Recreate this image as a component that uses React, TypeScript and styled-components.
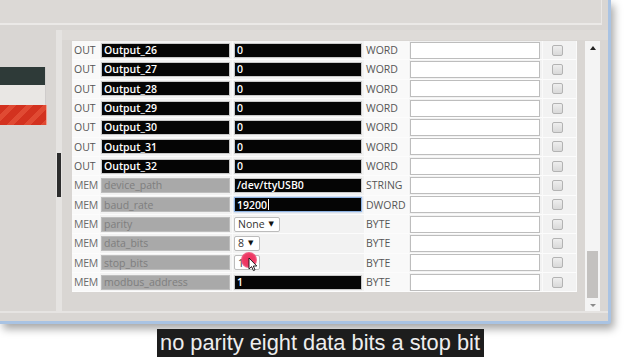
import * as React from "react"
import styled, { createGlobalStyle } from "styled-components"

const GlobalStyle = createGlobalStyle`
    html, body {
        margin: 0;
        padding: 0;
        background: #ffffff;
    }
    body {
        font-family: "Open Sans", "DejaVu Sans", sans-serif;
    }
`

type Kind = "out" | "mem"
type ValueKind = "field" | "focus" | "select"

interface IRow {
    kind: Kind
    name: string
    value: string
    valueKind: ValueKind
    type: string
    selectWidth?: number
    cursor?: boolean
}

const rows: IRow[] = [
    { kind: "out", name: "Output_26", value: "0", valueKind: "field", type: "WORD" },
    { kind: "out", name: "Output_27", value: "0", valueKind: "field", type: "WORD" },
    { kind: "out", name: "Output_28", value: "0", valueKind: "field", type: "WORD" },
    { kind: "out", name: "Output_29", value: "0", valueKind: "field", type: "WORD" },
    { kind: "out", name: "Output_30", value: "0", valueKind: "field", type: "WORD" },
    { kind: "out", name: "Output_31", value: "0", valueKind: "field", type: "WORD" },
    { kind: "out", name: "Output_32", value: "0", valueKind: "field", type: "WORD" },
    { kind: "mem", name: "device_path", value: "/dev/ttyUSB0", valueKind: "field", type: "STRING" },
    { kind: "mem", name: "baud_rate", value: "19200", valueKind: "focus", type: "DWORD" },
    { kind: "mem", name: "parity", value: "None", valueKind: "select", type: "BYTE", selectWidth: 46 },
    { kind: "mem", name: "data_bits", value: "8", valueKind: "select", type: "BYTE", selectWidth: 26 },
    { kind: "mem", name: "stop_bits", value: "1", valueKind: "select", type: "BYTE", selectWidth: 26, cursor: true },
    { kind: "mem", name: "modbus_address", value: "1", valueKind: "field", type: "BYTE" },
]

const Page = styled.div`
    width: 640px;
    height: 360px;
    overflow: hidden;
    background: #ffffff;
`

const Window = styled.div`
    width: 611px;
    height: 324px;
    display: flex;
    flex-direction: column;
    background: #d9d6d3;
    border-right: 3px solid #a9c3e3;
    border-bottom: 3px solid #a9c3e3;
    border-bottom-right-radius: 3px;
    box-shadow: 3px 5px 9px rgba(0, 0, 0, 0.35);
    padding-bottom: 8px;
    box-sizing: border-box;
`

const TopBar = styled.div`
    height: 24px;
    margin-right: 6px;
    background: #dcd9d6;
    border-bottom: 2px solid #ebe9e7;
    border-right: 1px solid #eae8e6;
`

const Main = styled.div`
    flex: 1;
    display: flex;
    margin-top: 5px;
    border-bottom: 2px solid #e6e4e2;
`

const LeftPanel = styled.div`
    width: 56px;
    padding-top: 37px;
    display: flex;
    flex-direction: column;
`

const Bar = styled.div<{ $tone: "dark" | "light" | "red" }>`
    width: ${p => (p.$tone === "red" ? 47 : 46)}px;
    height: ${p => (p.$tone === "dark" ? 18 : 20)}px;
    box-sizing: border-box;
    background: ${p =>
        p.$tone === "dark"
            ? "#2e3a38"
            : p.$tone === "light"
            ? "#e9e7e4"
            : "repeating-linear-gradient(135deg, #d3321f 0px, #d3321f 7px, #e04a33 7px, #e04a33 12px)"};
    border-right: 1px solid ${p => (p.$tone === "red" ? "#f0a090" : "#cfcccb")};
`

const Divider = styled.div`
    width: 6px;
    background: #e5e3e1;
    display: flex;
    flex-direction: column;
`

const DividerThumb = styled.div`
    margin-top: 123px;
    margin-left: 1px;
    width: 4px;
    height: 44px;
    background: #2c2c2c;
`

const Content = styled.div`
    flex: 1;
    display: flex;
    gap: 8px;
    padding: 11px 0 0 10px;
    background: linear-gradient(#dedbd8 0px, #dedbd8 10px, #d9d6d3 10px);
`

const Table = styled.div`
    width: 505px;
    display: grid;
    grid-template-columns: 28px 133px 132px 44px 134px 34px;
    grid-auto-rows: 19.33px;
    align-self: flex-start;
    background: #f3f3f3;
`

const Cell = styled.div<{ $light?: boolean }>`
    display: flex;
    align-items: center;
    box-sizing: border-box;
    padding: 0 2px 0 1px;
    background: ${p => (p.$light ? "#f9f9f9" : "#f2f2f2")};
    border-bottom: 1px solid #fcfcfc;
    border-right: 1px solid #fafafa;
    font-size: 10.5px;
    color: #565656;
    overflow: visible;
`

const KindLabel = styled.span<{ $mem: boolean }>`
    padding-left: 1px;
    color: ${p => (p.$mem ? "#6a6a6a" : "#555555")};
    letter-spacing: ${p => (p.$mem ? "-0.3px" : "0")};
`

const Field = styled.div<{ $tone: "black" | "grey"; $focus?: boolean }>`
    flex: 1;
    height: 15px;
    box-sizing: border-box;
    display: flex;
    align-items: center;
    padding-left: 2px;
    background: ${p => (p.$tone === "black" ? "#050505" : "#a9a9a9")};
    border: 1px solid ${p => (p.$focus ? "#8db2e2" : p.$tone === "black" ? "#c9c9c9" : "#bdbdbd")};
    box-shadow: ${p => (p.$focus ? "0 0 2px #9bbce8" : "none")};
    color: ${p => (p.$tone === "black" ? "#ffffff" : "#7e7e7e")};
    font-weight: ${p => (p.$tone === "black" ? 600 : 400)};
    font-size: 10.5px;
    white-space: nowrap;
`

const Caret = styled.span`
    display: inline-block;
    width: 1px;
    height: 11px;
    margin-left: 1px;
    background: #ffffff;
`

const Select = styled.div`
    position: relative;
    height: 15px;
    box-sizing: border-box;
    display: flex;
    align-items: center;
    gap: 4px;
    padding: 0 4px 0 3px;
    background: #ffffff;
    border: 1px solid #bcbcbc;
    border-radius: 2px;
    color: #333333;
    font-size: 10.5px;
`

const Arrow = styled.span`
    font-size: 7px;
    color: #111111;
    margin-top: -2px;
`

const ClickDot = styled.div`
    position: absolute;
    left: 6px;
    top: -4px;
    width: 16px;
    height: 16px;
    border-radius: 50%;
    background: radial-gradient(circle, #ec2e5c 0%, #ee3c66 55%, rgba(240, 70, 110, 0.6) 80%, rgba(240, 70, 110, 0) 100%);
`

const Pointer = styled.svg`
    position: absolute;
    left: 13px;
    top: 1px;
`

const Comment = styled.div`
    flex: 1;
    height: 17px;
    box-sizing: border-box;
    background: #ffffff;
    border: 1px solid #bdbdbd;
`

const CheckCell = styled(Cell)`
    justify-content: center;
    padding: 0 4px 0 0;
`

const CheckBox = styled.div`
    width: 11px;
    height: 11px;
    box-sizing: border-box;
    border: 1px solid #b3b3b3;
    border-radius: 2px;
    background: linear-gradient(#eeeeee, #d9d9d9);
`

const ScrollTrack = styled.div`
    width: 15px;
    height: 270px;
    display: flex;
    flex-direction: column;
    align-items: center;
    background: #f4f4f4;
    box-sizing: border-box;
    padding: 5px 0 4px;
`

const ScrollArrow = styled.div<{ $down?: boolean }>`
    width: 0;
    height: 0;
    border-left: 3.5px solid transparent;
    border-right: 3.5px solid transparent;
    ${p => (p.$down ? "border-top: 3px solid #8a8a8a;" : "border-bottom: 4px solid #222222;")}
`

const ScrollSpace = styled.div`
    flex: 1;
`

const ScrollThumb = styled.div`
    width: 11px;
    height: 47px;
    background: #c3c1bf;
    margin-bottom: 6px;
`

const Caption = styled.div`
    display: flex;
    justify-content: center;
    margin-top: 5px;
`

const CaptionText = styled.span`
    height: 28px;
    line-height: 28px;
    padding: 0 4px 0 3px;
    background: #1d1d1d;
    color: #eeeeee;
    font-family: "Liberation Sans", Arial, sans-serif;
    font-size: 21.8px;
    margin-left: 1px;
`

function ValueCell({ row }: { row: IRow }) {
    if (row.valueKind === "select") {
        return (
            <Cell>
                <Select style={{ width: row.selectWidth }}>
                    <span>{row.value}</span>
                    <Arrow>▼</Arrow>
                    {row.cursor && (
                        <>
                            <ClickDot />
                            <Pointer width="10" height="15" viewBox="0 0 10 15">
                                <path d="M1 1 L1 12 L3.6 9.6 L5.4 13.6 L7 12.9 L5.3 9 L8.8 9 Z" fill="#ffffff" stroke="#111111" strokeWidth="0.9" strokeLinejoin="round" />
                            </Pointer>
                        </>
                    )}
                </Select>
            </Cell>
        )
    }
    return (
        <Cell>
            <Field $tone="black" $focus={row.valueKind === "focus"}>
                {row.value}
                {row.valueKind === "focus" && <Caret />}
            </Field>
        </Cell>
    )
}

export default function App() {
    return (
        <Page>
            <GlobalStyle />
            <Window>
                <TopBar />
                <Main>
                    <LeftPanel>
                        <Bar $tone="dark" />
                        <Bar $tone="light" />
                        <Bar $tone="red" />
                    </LeftPanel>
                    <Divider>
                        <DividerThumb />
                    </Divider>
                    <Content>
                        <Table>
                            {rows.map(row => (
                                <React.Fragment key={row.name}>
                                    <Cell $light>
                                        <KindLabel $mem={row.kind === "mem"}>{row.kind === "out" ? "OUT" : "MEM"}</KindLabel>
                                    </Cell>
                                    <Cell>
                                        <Field $tone={row.kind === "out" ? "black" : "grey"}>{row.name}</Field>
                                    </Cell>
                                    <ValueCell row={row} />
                                    <Cell $light>{row.type}</Cell>
                                    <Cell>
                                        <Comment />
                                    </Cell>
                                    <CheckCell>
                                        <CheckBox />
                                    </CheckCell>
                                </React.Fragment>
                            ))}
                        </Table>
                        <ScrollTrack>
                            <ScrollArrow />
                            <ScrollSpace />
                            <ScrollThumb />
                            <ScrollArrow $down />
                        </ScrollTrack>
                    </Content>
                </Main>
            </Window>
            <Caption>
                <CaptionText>no parity eight data bits a stop bit</CaptionText>
            </Caption>
        </Page>
    )
}
